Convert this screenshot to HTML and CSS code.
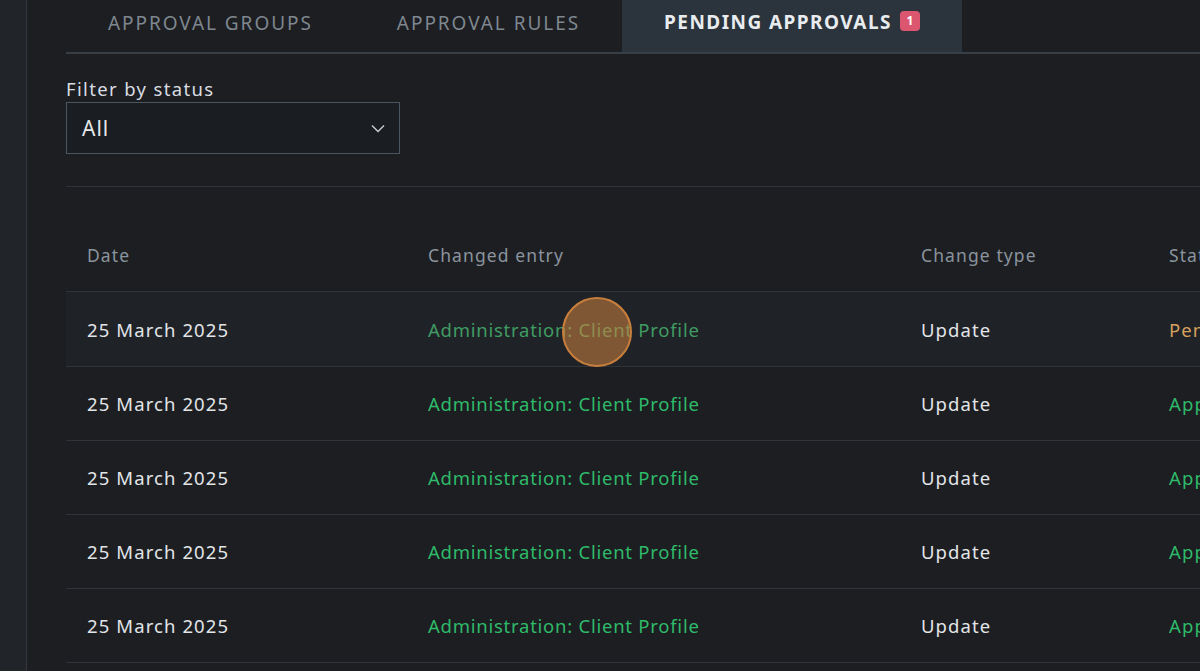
FILE: index.html
```html
<!DOCTYPE html>
<html>

	<head>

		<meta charset="UTF-8">
		<link rel="stylesheet" href="styles.css">
		<title>Pending Approvals</title>

	</head>

	<body>

		<div class="layout">
			<aside class="sidebar"></aside>

			<main class="content">

				<nav class="tabs">
					<a class="tab">Approval groups</a>
					<a class="tab">Approval rules</a>
					<a class="tab tab-active">Pending approvals <span class="badge">1</span></a>
				</nav>

				<div class="filter">
					<label class="filter-label">Filter by status</label>
					<div class="select">
						<span class="select-value">All</span>
						<svg class="select-chevron" width="14" height="9" viewBox="0 0 14 9">
							<path d="M1 1.5 L7 7.5 L13 1.5" fill="none" stroke="#c9ced3" stroke-width="1.4"/>
						</svg>
					</div>
				</div>

				<div class="table">
					<div class="row row-head">
						<div class="cell">Date</div>
						<div class="cell">Changed entry</div>
						<div class="cell">Change type</div>
						<div class="cell">Status</div>
					</div>
					<div class="row row-hover">
						<div class="cell">25 March 2025</div>
						<div class="cell"><a class="entry-link">Administration: Client Profile</a></div>
						<div class="cell">Update</div>
						<div class="cell status-pending">Pending</div>
					</div>
					<div class="row">
						<div class="cell">25 March 2025</div>
						<div class="cell"><a class="entry-link">Administration: Client Profile</a></div>
						<div class="cell">Update</div>
						<div class="cell status-approved">Approved</div>
					</div>
					<div class="row">
						<div class="cell">25 March 2025</div>
						<div class="cell"><a class="entry-link">Administration: Client Profile</a></div>
						<div class="cell">Update</div>
						<div class="cell status-approved">Approved</div>
					</div>
					<div class="row">
						<div class="cell">25 March 2025</div>
						<div class="cell"><a class="entry-link">Administration: Client Profile</a></div>
						<div class="cell">Update</div>
						<div class="cell status-approved">Approved</div>
					</div>
					<div class="row">
						<div class="cell">25 March 2025</div>
						<div class="cell"><a class="entry-link">Administration: Client Profile</a></div>
						<div class="cell">Update</div>
						<div class="cell status-approved">Approved</div>
					</div>
				</div>

			</main>
		</div>

		<!-- click marker -->
		<div class="click-marker"></div>

	</body>
</html>
```

FILE: styles.css
```css
html, body {
	margin: 0;
	height: 100%;
	overflow: hidden;
}
body {
	font-family: "Noto Sans", "DejaVu Sans", sans-serif;
	background: #1c1e22;
	color: #e2e5e8;
}
.layout {
	display: flex;
	height: 100%;
}
.sidebar {
	width: 26px;
	flex-shrink: 0;
	background: #212429;
	border-right: 1px solid #33373d;
}
.content {
	flex-shrink: 0;
	width: 1400px;
	margin-left: 39px;
}

/* tabs */
.tabs {
	display: flex;
	border-bottom: 2px solid #383e46;
	height: 52px;
}
.tab {
	padding: 0 42px;
	display: flex;
	align-items: center;
	height: 45px;
	font-size: 19px;
	letter-spacing: 1.95px;
	text-transform: uppercase;
	color: #7f878f;
}
.tab-active {
	height: 52px;
	align-items: flex-start;
	padding-top: 9px;
	box-sizing: border-box;
	background: #2b333c;
	color: #e8ecef;
	font-weight: bold;
	letter-spacing: 1.45px;
}
.badge {
	display: inline-block;
	margin-left: 8px;
	margin-top: 2px;
	width: 20px;
	height: 20px;
	line-height: 20px;
	border-radius: 4px;
	background: #dc5670;
	color: #fff;
	font-size: 12px;
	letter-spacing: 0;
	text-align: center;
}

/* filter */
.filter {
	padding: 23px 0 32px;
	border-bottom: 1px solid #2f3339;
}
.filter-label {
	display: block;
	font-size: 18.5px;
	letter-spacing: 1.35px;
	line-height: 24px;
	color: #d9dde1;
	margin-bottom: 1px;
}
.select {
	height: 50px;
	border: 1px solid #4a5561;
	background: #1a1d21;
	display: flex;
	align-items: center;
	justify-content: space-between;
	padding: 0 14px 0 15px;
	width: 303px;
}
.select-value {
	font-size: 21px;
	letter-spacing: 1px;
	color: #e4e7ea;
}

/* table */
.table {
	margin-top: 32px;
}
.row {
	display: grid;
	grid-template-columns: 341px 493px 248px 1fr;
	height: 73px;
	align-items: center;
	border-bottom: 1px solid #2f343a;
	font-size: 18.5px;
	letter-spacing: 1.1px;
}
.row-head {
	height: 72px;
	color: #8b949d;
	font-size: 17.5px;
	letter-spacing: 1.1px;
}
.row-hover {
	height: 74px;
	background: #1f2227;
}
.cell {
	padding-left: 21px;
	white-space: nowrap;
}
.entry-link {
	color: #2fba6a;
	letter-spacing: 0.75px;
}
.row-hover .entry-link {
	color: #3f9c62;
}
.status-pending {
	color: #d8a05e;
}
.status-approved {
	color: #2fba6a;
}

.click-marker {
	position: absolute;
	left: 562px;
	top: 297px;
	width: 66px;
	height: 66px;
	border-radius: 50%;
	border: 2px solid #c97f3c;
	background: rgba(208, 132, 63, 0.55);
}
```
